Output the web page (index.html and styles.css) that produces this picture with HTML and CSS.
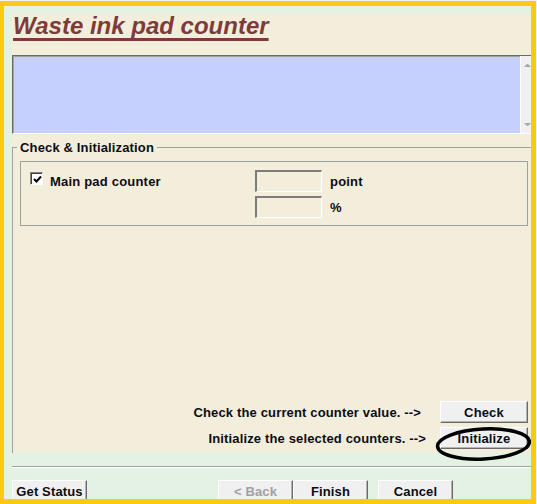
FILE: index.html
```html
<!DOCTYPE html>
<html>
<head>
<meta charset="utf-8">
<link rel="stylesheet" href="styles.css">
</head>
<body>
<div class="frame">
  <div class="panel">
    <h1 class="title">Waste ink pad counter</h1>
    <div class="textarea">
      <div class="ta-body"></div>
      <div class="scrollbar"><span class="arrow up"></span><span class="arrow down"></span></div>
    </div>
    <fieldset class="group">
      <legend>Check &amp; Initialization</legend>
      <div class="counters">
        <div class="chk-label">
          <span class="box"><svg width="9" height="9" viewBox="0 0 9 9"><polyline points="1,4 3.5,6.5 8,1.5" fill="none" stroke="#000" stroke-width="2"/></svg></span>
          <span class="chk-text">Main pad counter</span>
        </div>
        <div class="fields">
          <div class="field"><span class="input"></span><span>point</span></div>
          <div class="field"><span class="input"></span><span>%</span></div>
        </div>
      </div>
      <div class="actions">
        <div class="action action-check"><span>Check the current counter value. --&gt;</span><button class="btn">Check</button></div>
        <div class="action action-init"><span>Initialize the selected counters. --&gt;</span>
          <span class="circled"><button class="btn">Initialize</button><svg class="ellipse" width="104" height="40" viewBox="0 0 104 40"><ellipse cx="51.5" cy="21" rx="46" ry="15" transform="rotate(-3 51.5 21)" fill="none" stroke="#000" stroke-width="3.5"/></svg></span>
        </div>
      </div>
    </fieldset>
  </div>
  <div class="sep"></div>
  <div class="footer">
    <button class="btn fbtn">Get Status</button>
    <div class="nav">
      <button class="btn fbtn disabled">&lt; Back</button>
      <button class="btn fbtn">Finish</button>
      <button class="btn fbtn cancel">Cancel</button>
    </div>
  </div>
</div>
</body>
</html>
```
FILE: styles.css
```css
* { box-sizing: border-box; }
html, body { margin: 0; padding: 0; }
body {
  background: #f0f0f0;
  width: 537px;
  height: 504px;
  overflow: hidden;
  font-family: "Liberation Sans", Arial, sans-serif;
  color: #0c0c14;
}
.frame {
  margin-top: 1px;
  width: 536px;
  height: 503px;
  border-style: solid;
  border-color: #ffc814;
  border-width: 5px 5px 5px 4px;
  background: #e3f2e3;
  padding: 8px 0 0 8px;
  overflow: hidden;
}
.panel {
  background: #f3eedb;
  height: 439px;
  display: flex;
  flex-direction: column;
}
.title {
  margin: 0;
  padding-left: 1px;
  font: italic bold 24px/24px "Liberation Sans", Arial, sans-serif;
  color: #7f3b3b;
  text-decoration: underline;
  text-decoration-thickness: 3px;
  text-underline-offset: 4px;
  text-decoration-skip-ink: none;
}
.textarea {
  margin-top: 17px;
  height: 79px;
  display: flex;
  border-top: 1px solid #6a6a6a;
  border-left: 1px solid #6a6a6a;
  border-bottom: 1px solid #ffffff;
}
.ta-body {
  flex: 1;
  background: #c6d0ff;
  box-shadow: inset 1px 1px 0 #a0a0a0;
}
.scrollbar {
  width: 11px;
  background: #f0f0f0;
  border-left: 1px solid #ffffff;
  display: flex;
  flex-direction: column;
  justify-content: space-between;
  padding: 8px 0 7px 3px;
}
.arrow {
  width: 7px;
  height: 0;
  border-left: 3px solid transparent;
  border-right: 3px solid transparent;
}
.arrow.up { border-bottom: 3px solid #a8a8a8; }
.arrow.down { border-top: 3px solid #a8a8a8; }

.group {
  margin: 6px 0 0;
  padding: 6px 3px 0 7px;
  border: none;
  border-top: 1px solid #a0a0a0;
  border-left: 1px solid #a0a0a0;
  flex: 1;
  min-width: 0;
}
.group legend {
  margin-left: -3px;
  padding: 0 3px;
  font: bold 13px/15px "Liberation Sans", Arial, sans-serif;
  letter-spacing: 0.15px;
}
.counters {
  height: 65px;
  border: 1px solid #a0a0a0;
  padding: 8px 0 0 9px;
  display: flex;
  font: bold 13px/15px "Liberation Sans", Arial, sans-serif;
  letter-spacing: 0.2px;
}
.chk-label {
  width: 225px;
  display: flex;
  align-items: flex-start;
  gap: 7px;
}
.box {
  margin-top: 2px;
  width: 13px;
  height: 13px;
  background: #ffffff;
  border-style: solid;
  border-width: 1px;
  border-color: #808080 #ffffff #ffffff #808080;
  box-shadow: inset 1px 1px 0 #404040;
  display: flex;
  align-items: center;
  justify-content: center;
  padding: 1px 0 0 1px;
}
.box svg { display: block; }
.chk-text { margin-top: 4px; }
.fields {
  display: flex;
  flex-direction: column;
  gap: 4px;
}
.field {
  display: flex;
  align-items: center;
  gap: 8px;
}
.input {
  width: 67px;
  height: 22px;
  border-style: solid;
  border-width: 2px 1px 1px 2px;
  border-color: #7c7c7c #ffffff #ffffff #7c7c7c;
}
.actions {
  margin-top: 175px;
  display: flex;
  flex-direction: column;
  align-items: flex-end;
  gap: 4px;
  font: bold 13px/15px "Liberation Sans", Arial, sans-serif;
  letter-spacing: 0.15px;
}
.action {
  display: flex;
  align-items: center;
}
.action-check { gap: 19px; }
.action-init { gap: 14px; }
.btn {
  margin: 0;
  width: 88px;
  height: 22px;
  padding: 0;
  background: #f0f0f0;
  border-style: solid;
  border-width: 1px;
  border-color: #ffffff #696969 #696969 #ffffff;
  box-shadow: inset -1px -1px 0 #b4b4b4;
  font: bold 13px/15px "Liberation Sans", Arial, sans-serif;
  letter-spacing: 0.15px;
  color: #0c0c14;
}
.circled {
  position: relative;
  display: block;
}
.circled .btn { display: block; }
.ellipse {
  position: absolute;
  left: -8px;
  top: -4px;
  overflow: visible;
}
.sep {
  margin-top: 13px;
  height: 2px;
  border-top: 1px solid #a0a0a0;
  border-bottom: 1px solid #ffffff;
}
.footer {
  margin-top: 12px;
  display: flex;
}
.fbtn {
  width: 75px;
  height: 23px;
}
.nav {
  margin-left: 131px;
  display: flex;
}
.fbtn.cancel { margin-left: 10px; }
.fbtn.disabled { color: #a0a0a0; }
```
